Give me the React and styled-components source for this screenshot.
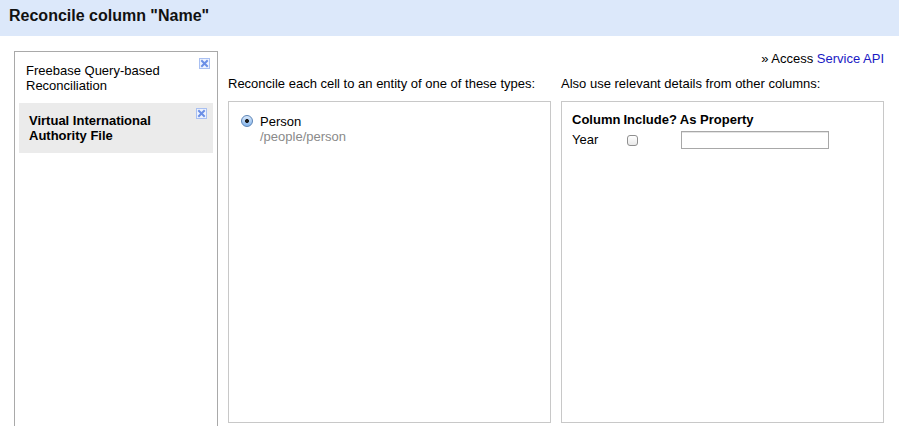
import React from "react";
import styled, { createGlobalStyle } from "styled-components";

const Global = createGlobalStyle`
  html, body { margin: 0; padding: 0; overflow: hidden; background: #fff; }
  body { font-family: "Liberation Sans", Arial, sans-serif; font-size: 13px; color: #000; }
  * { box-sizing: border-box; }
`;

const Header = styled.div`
  height: 36px;
  background: #dce8fa;
  padding: 7px 0 0 9px;
  font-size: 16px;
  line-height: 18px;
  font-weight: bold;
  color: #111;
`;

const Body = styled.div`
  display: flex;
  align-items: flex-start;
  gap: 10px;
  padding: 15px 0 0 14px;
  line-height: 15px;
`;

const ServicePanel = styled.div`
  flex: none;
  width: 204px;
  height: 392px;
  border: 1px solid #a9a9a9;
  padding: 1px 4px;
`;

const ServiceItem = styled.div`
  position: relative;
  padding: 10px 20px 10px ${(p) => (p.$selected ? 10 : 7)}px;
  background: ${(p) => (p.$selected ? "#ebebeb" : "transparent")};
  font-weight: ${(p) => (p.$selected ? "bold" : "normal")};
`;

const CloseIcon = styled.svg`
  position: absolute;
  top: 5px;
  right: ${(p) => p.$right}px;
  width: 11px;
  height: 11px;
`;

const Main = styled.div`
  width: 656px;
`;

const AccessRow = styled.div`
  text-align: right;
  margin-bottom: 10px;
`;

const Link = styled.a`
  color: #1a1ac4;
  text-decoration: none;
`;

const Columns = styled.div`
  display: grid;
  grid-template-columns: 323px 323px;
  column-gap: 10px;
`;

const Label = styled.div`
  margin-bottom: 10px;
`;

const Box = styled.div`
  height: 322px;
  border: 1px solid #c8c8c8;
  padding: ${(p) => p.$padding};
`;

const TypeRow = styled.label`
  display: flex;
  align-items: flex-start;
  gap: 7px;
`;

const Radio = styled.input.attrs({ type: "radio" })`
  appearance: none;
  margin: 1px 0 0 0;
  width: 12px;
  height: 12px;
  border-radius: 50%;
  border: 1px solid #5c84b6;
  background: radial-gradient(circle, #1c1c1c 0 1.6px, transparent 2.3px),
    linear-gradient(#d8e8fb, #86b6ec);
  flex: none;
`;

const TypeName = styled.div``;

const TypeId = styled.div`
  color: #8a8a8a;
`;

const DetailGrid = styled.div`
  display: grid;
  grid-template-columns: auto auto auto;
  justify-content: start;
  column-gap: 3px;
  row-gap: 3px;
  align-items: center;
`;

const HeadCell = styled.div`
  font-weight: bold;
`;

const Cell = styled.div`
  display: flex;
  align-items: center;
`;

const Check = styled.input.attrs({ type: "checkbox" })`
  appearance: none;
  margin: 1px 0 0 4px;
  width: 11px;
  height: 11px;
  border: 1px solid #8f8f8f;
  border-radius: 3px;
  background: linear-gradient(#fff, #e9e9e9);
`;

const PropInput = styled.input`
  width: 148px;
  height: 18px;
  margin: 1px 0 0 1px;
  border: 1px solid #a8a8a8;
  box-shadow: inset 0 1px 0 #e4e4e4;
  padding: 0 2px;
  font: inherit;
`;

function Close({ right }) {
  return (
    <CloseIcon $right={right} viewBox="0 0 11 11">
      <rect x="0.5" y="0.5" width="10" height="10" fill="#eef3fe" stroke="#a9c0f2" />
      <path d="M3 3 L8 8 M8 3 L3 8" stroke="#6b8fe6" strokeWidth="2" strokeLinecap="square" />
    </CloseIcon>
  );
}

export default function App() {
  return (
    <>
      <Global />
      <Header>Reconcile column "Name"</Header>
      <Body>
        <ServicePanel>
          <ServiceItem>
            Freebase Query-based
            <br />
            Reconciliation
            <Close right={3} />
          </ServiceItem>
          <ServiceItem $selected>
            Virtual International
            <br />
            Authority File
            <Close right={6} />
          </ServiceItem>
        </ServicePanel>
        <Main>
          <AccessRow>
            » Access <Link href="#">Service API</Link>
          </AccessRow>
          <Columns>
            <div>
              <Label>Reconcile each cell to an entity of one of these types:</Label>
              <Box $padding="12px 12px">
                <TypeRow>
                  <Radio defaultChecked name="type" />
                  <div>
                    <TypeName>Person</TypeName>
                    <TypeId>/people/person</TypeId>
                  </div>
                </TypeRow>
              </Box>
            </div>
            <div>
              <Label>Also use relevant details from other columns:</Label>
              <Box $padding="10px 10px">
                <DetailGrid>
                  <HeadCell>Column</HeadCell>
                  <HeadCell>Include?</HeadCell>
                  <HeadCell>As Property</HeadCell>
                  <Cell>Year</Cell>
                  <Cell>
                    <Check />
                  </Cell>
                  <Cell>
                    <PropInput type="text" />
                  </Cell>
                </DetailGrid>
              </Box>
            </div>
          </Columns>
        </Main>
      </Body>
    </>
  );
}
